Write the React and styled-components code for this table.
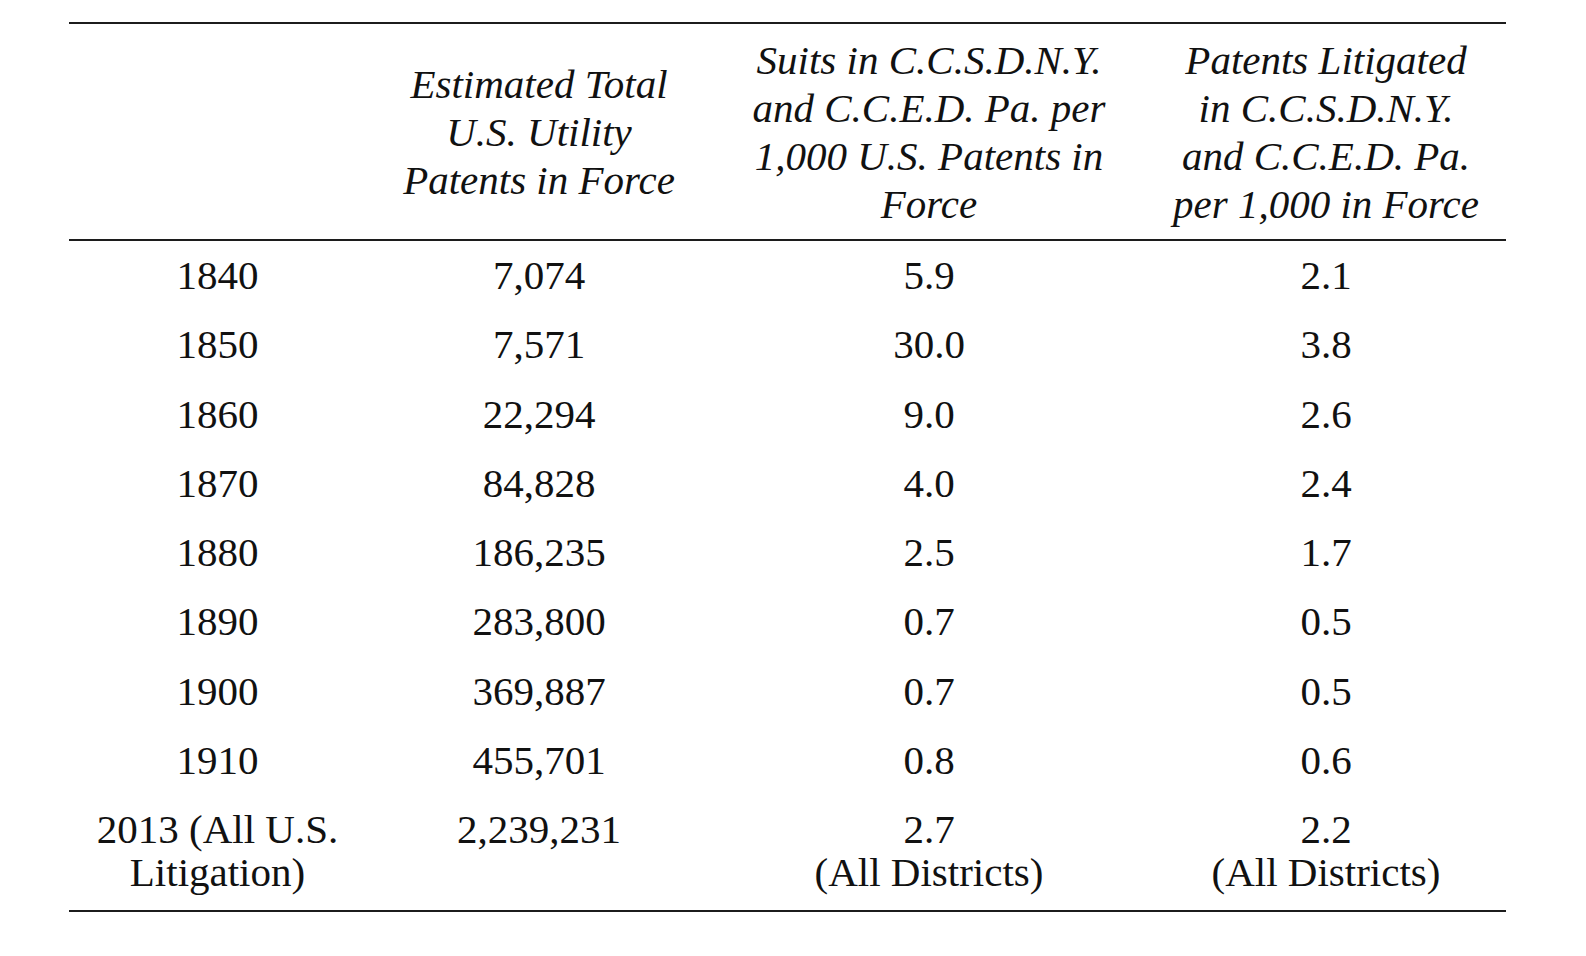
import React from 'react'
import styled, { createGlobalStyle } from 'styled-components'

const GlobalStyle = createGlobalStyle`
  html, body {
    margin: 0;
    padding: 0;
    background: #ffffff;
  }
  body {
    font-family: 'Liberation Serif', 'Times New Roman', serif;
    color: #111111;
  }
`

const Page = styled.div`
  width: 1586px;
  height: 956px;
  padding: 22px 0 0 69px;
  box-sizing: border-box;
`

const Table = styled.table`
  width: 1437px;
  border-collapse: collapse;
  table-layout: fixed;
  font-size: 41px;
`

const HeadCell = styled.th`
  font-weight: normal;
  font-style: italic;
  line-height: 48px;
  text-align: center;
  vertical-align: middle;
  height: 215px;
  padding: 0;
  white-space: nowrap;
  border-top: 2px solid #1c1c1c;
  border-bottom: 2px solid #1c1c1c;
`

const Cell = styled.td`
  text-align: center;
  vertical-align: middle;
  padding: 0;
  height: ${(p) => (p.$tall ? '116px' : '69.25px')};
  line-height: 43px;
  white-space: nowrap;
  ${(p) => p.$tall && 'vertical-align: top; padding-top: 13px; box-sizing: border-box;'}
  ${(p) => p.$last && 'border-bottom: 2px solid #1c1c1c;'}
`

const cols = [297, 346, 434, 360]

const rows = [
  ['1840', '7,074', '5.9', '2.1'],
  ['1850', '7,571', '30.0', '3.8'],
  ['1860', '22,294', '9.0', '2.6'],
  ['1870', '84,828', '4.0', '2.4'],
  ['1880', '186,235', '2.5', '1.7'],
  ['1890', '283,800', '0.7', '0.5'],
  ['1900', '369,887', '0.7', '0.5'],
  ['1910', '455,701', '0.8', '0.6'],
]

const headers = [
  [],
  ['Estimated Total', 'U.S. Utility', 'Patents in Force'],
  ['Suits in C.C.S.D.N.Y.', 'and C.C.E.D. Pa. per', '1,000 U.S. Patents in', 'Force'],
  ['Patents Litigated', 'in C.C.S.D.N.Y.', 'and C.C.E.D. Pa.', 'per 1,000 in Force'],
]

const Lines = ({ lines }) =>
  lines.map((l, i) => (
    <React.Fragment key={i}>
      {i > 0 && <br />}
      {l}
    </React.Fragment>
  ))

export default function App() {
  return (
    <>
      <GlobalStyle />
      <Page>
        <Table>
          <colgroup>
            {cols.map((w, i) => (
              <col key={i} style={{ width: w }} />
            ))}
          </colgroup>
          <thead>
            <tr>
              {headers.map((h, i) => (
                <HeadCell key={i}>
                  <Lines lines={h} />
                </HeadCell>
              ))}
            </tr>
          </thead>
          <tbody>
            {rows.map((r) => (
              <tr key={r[0]}>
                {r.map((v, i) => (
                  <Cell key={i}>{v}</Cell>
                ))}
              </tr>
            ))}
            <tr>
              <Cell $tall $last>
                <Lines lines={['2013 (All U.S.', 'Litigation)']} />
              </Cell>
              <Cell $tall $last>2,239,231</Cell>
              <Cell $tall $last>
                <Lines lines={['2.7', '(All Districts)']} />
              </Cell>
              <Cell $tall $last>
                <Lines lines={['2.2', '(All Districts)']} />
              </Cell>
            </tr>
          </tbody>
        </Table>
      </Page>
    </>
  )
}
